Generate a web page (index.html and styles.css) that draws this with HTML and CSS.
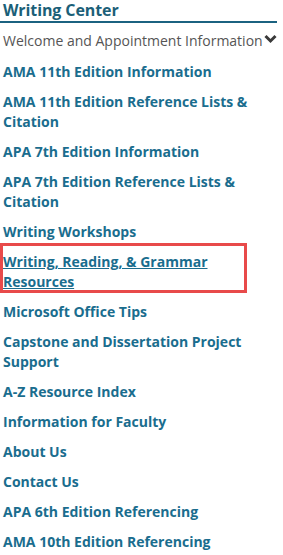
FILE: index.html
```html
<!DOCTYPE html>
<html lang="en">

<head>
    <meta charset="UTF-8">
    <meta name="viewport" content="width=device-width, initial-scale=1.0">
    <title>Writing Center</title>
    <link rel="stylesheet" href="styles.css">
</head>

<body>
    <nav class="side-nav">
        <h2 class="nav-title">Writing Center</h2>
        <div class="nav-group">
            <span>Welcome and Appointment Information</span>
            <svg class="chevron" width="13" height="10" viewBox="0 0 13 10">
                <path d="M1.5 2 L6.5 7 L11.5 2" fill="none" stroke="#3a3a3a" stroke-width="3" />
            </svg>
        </div>
        <ul class="nav-list">
            <li><a href="#">AMA 11th Edition Information</a></li>
            <li><a href="#">AMA 11th Edition Reference Lists &amp; Citation</a></li>
            <li><a href="#">APA 7th Edition Information</a></li>
            <li><a href="#">APA 7th Edition Reference Lists &amp; Citation</a></li>
            <li><a href="#">Writing Workshops</a></li>
            <li class="highlight"><a href="#" class="current">Writing, Reading, &amp; Grammar Resources</a></li>
            <li><a href="#">Microsoft Office Tips</a></li>
            <li><a href="#">Capstone and Dissertation Project Support</a></li>
            <li><a href="#">A-Z Resource Index</a></li>
            <li><a href="#">Information for Faculty</a></li>
            <li><a href="#">About Us</a></li>
            <li><a href="#">Contact Us</a></li>
            <li><a href="#">APA 6th Edition Referencing</a></li>
            <li><a href="#">AMA 10th Edition Referencing</a></li>
        </ul>
    </nav>
</body>

</html>
```

FILE: styles.css
```css
body {
    font-family: "Open Sans", Arial, sans-serif;
    margin: 0;
    background: #fff;
}

.side-nav {
    width: 277px;
}

.nav-title {
    font-size: 16px;
    font-weight: 700;
    letter-spacing: -0.1px;
    color: #1b5f78;
    margin: 0;
    line-height: 21px;
    padding-left: 3px;
    border-bottom: 2px solid #1b6280;
}

.nav-group {
    display: flex;
    align-items: center;
    font-size: 14px;
    line-height: 20px;
    color: #555;
    padding: 8px 0 6px 3px;
    white-space: nowrap;
}

.chevron {
    margin-left: 1px;
    margin-top: -4px;
}

.nav-list {
    list-style: none;
    margin: 0;
    padding: 0 0 0 3px;
    font-size: 14px;
    line-height: 20px;
}

.nav-list li {
    padding: 5px 0;
}

.nav-list a {
    font-weight: 700;
    color: #1a6d8e;
    text-decoration: none;
}

/* current page marker */
.highlight {
    position: relative;
}

.highlight::after {
    content: "";
    position: absolute;
    top: -4px;
    left: -3px;
    width: 247px;
    height: 50px;
    box-sizing: border-box;
    border: 3px solid #e84a4a;
}

.nav-list a.current {
    text-decoration: underline;
}
```
